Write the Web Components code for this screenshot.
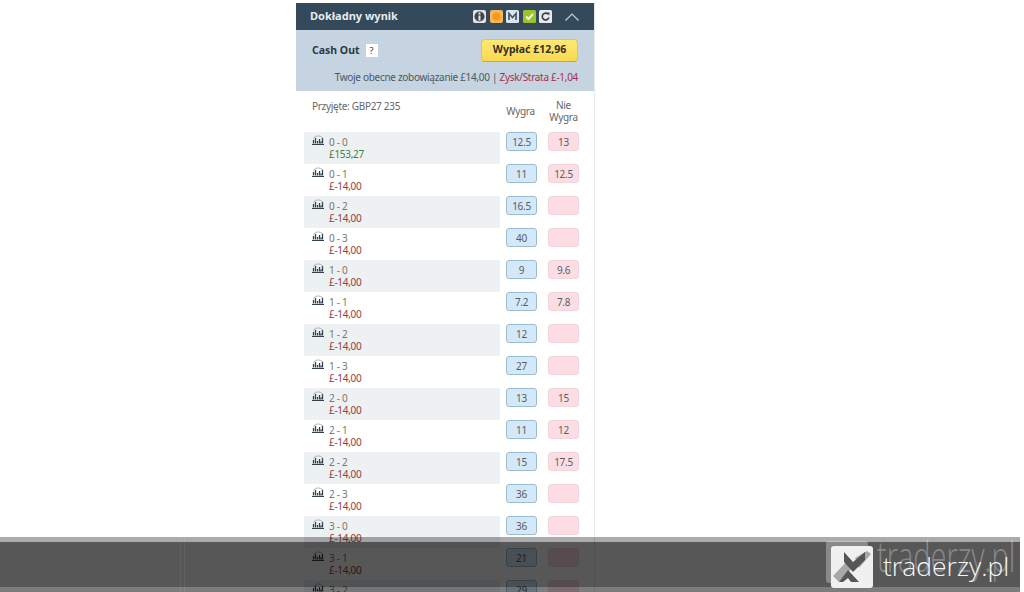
<!DOCTYPE html>
<html lang="pl">
<head>
<meta charset="utf-8">
<title>Dokładny wynik</title>
<style>
  html, body { margin: 0; height: 592px; overflow: hidden; background: #fff; }
  body { font-family: "Noto Sans", "DejaVu Sans", sans-serif; font-size: 10px; letter-spacing: -0.3px; color: #444; }
</style>
</head>
<body>
<bet-panel>
  <panel-header title="Dokładny wynik"></panel-header>
  <cash-out amount="£12,96" liability="£14,00" pl="£-1,04"></cash-out>
  <odds-head ref="GBP27 235"></odds-head>
  <score-row score="0 - 0" pl="£153,27" back="12.5" lay="13" shade win></score-row>
  <score-row score="0 - 1" pl="£-14,00" back="11" lay="12.5"></score-row>
  <score-row score="0 - 2" pl="£-14,00" back="16.5" shade></score-row>
  <score-row score="0 - 3" pl="£-14,00" back="40"></score-row>
  <score-row score="1 - 0" pl="£-14,00" back="9" lay="9.6" shade></score-row>
  <score-row score="1 - 1" pl="£-14,00" back="7.2" lay="7.8"></score-row>
  <score-row score="1 - 2" pl="£-14,00" back="12" shade></score-row>
  <score-row score="1 - 3" pl="£-14,00" back="27"></score-row>
  <score-row score="2 - 0" pl="£-14,00" back="13" lay="15" shade></score-row>
  <score-row score="2 - 1" pl="£-14,00" back="11" lay="12"></score-row>
  <score-row score="2 - 2" pl="£-14,00" back="15" lay="17.5" shade></score-row>
  <score-row score="2 - 3" pl="£-14,00" back="36"></score-row>
  <score-row score="3 - 0" pl="£-14,00" back="36" shade></score-row>
  <score-row score="3 - 1" pl="£-14,00" back="21"></score-row>
  <score-row score="3 - 2" pl="£-14,00" back="29" shade></score-row>
</bet-panel>
<watermark-bar></watermark-bar>

<script>
class BaseComponent extends HTMLElement {
  constructor() {
    super();
    this.attachShadow({ mode: 'open' });
  }

  attr(name) {
    return this.getAttribute(name) || '';
  }

  connectedCallback() {
    this.shadowRoot.innerHTML = this.template();
  }
}

class BetPanel extends BaseComponent {
  template() {
    return `
      <style>
        :host {
          display: block;
          box-sizing: border-box;
          width: 299px;
          margin: 3px 0 0 296px;
          border-right: 1px solid #e6e9ec;
          background: #fff;
        }
      </style>
      <slot></slot>
    `;
  }
}

class PanelHeader extends BaseComponent {
  template() {
    return `
      <style>
        :host {
          display: flex;
          align-items: center;
          height: 27px;
          padding: 0 15px 0 14px;
          background: #34495a;
          color: #e6ecf0;
          font-size: 11px;
          font-weight: bold;
          letter-spacing: 0;
        }
        .title { flex: 1; margin-bottom: 2px; }
        .icons { display: flex; gap: 3.5px; margin-right: 13px; }
        svg { display: block; }
      </style>
      <span class="title">${this.attr('title')}</span>
      <div class="icons">
        <svg width="13" height="13" viewBox="0 0 13 13"><rect width="13" height="13" rx="2" fill="#dfe3e6"/><circle cx="6.5" cy="6.5" r="5" fill="#3f454a"/><rect x="5.5" y="2.5" width="2" height="2" fill="#e8e8e8"/><rect x="5.5" y="5.5" width="2" height="5" fill="#e8e8e8"/></svg>
        <svg width="13" height="13" viewBox="0 0 13 13"><rect width="13" height="13" rx="2" fill="#f7b55a"/><circle cx="6.5" cy="6.5" r="4" fill="#f39a1e"/></svg>
        <svg width="13" height="13" viewBox="0 0 13 13"><rect width="13" height="13" rx="1.5" fill="#d6e5f1"/><path d="M3 10V3.5L6.5 7.5L10 3.5V10" fill="none" stroke="#4a5761" stroke-width="1.7"/></svg>
        <svg width="13" height="13" viewBox="0 0 13 13"><rect width="13" height="13" rx="1.5" fill="#9cc32c"/><path d="M3 6.5L5.5 9L10 4" fill="none" stroke="#f4f7e6" stroke-width="2"/></svg>
        <svg width="13" height="13" viewBox="0 0 13 13"><rect width="13" height="13" rx="1.5" fill="#e6eaed"/><path d="M9.3 4.3A3.4 3.4 0 1 0 9.9 7.5" fill="none" stroke="#3a3f44" stroke-width="1.7"/><path d="M7.5 2.5H10.5V5.5Z" fill="#3a3f44"/></svg>
      </div>
      <svg width="14" height="8" viewBox="0 0 14 8"><path d="M.5 7.5L7 1L13.5 7.5" fill="none" stroke="#c4cfd6" stroke-width="1.2"/></svg>
    `;
  }
}

class CashOut extends BaseComponent {
  template() {
    return `
      <style>
        :host {
          display: block;
          box-sizing: border-box;
          height: 61px;
          padding: 9px 16px 0 16px;
          background: #c5d4e0;
          color: #2b3a45;
        }
        .top { display: flex; align-items: center; height: 23px; font-size: 10.5px; font-weight: bold; letter-spacing: 0; }
        .label { margin-bottom: 2px; }
        .help {
          width: 12px;
          height: 13px;
          margin: 0 0 1px 6px;
          background: #fff;
          font-weight: normal;
          font-size: 9px;
          line-height: 13px;
          text-align: center;
        }
        .btn {
          box-sizing: border-box;
          width: 97px;
          height: 23px;
          margin-left: auto;
          border: 1px solid #e6c53c;
          border-bottom-color: #c9a92c;
          border-radius: 4px;
          background: linear-gradient(#ffe873, #fbd94f);
          text-align: center;
          line-height: 19px;
          color: #33302a;
        }
        .line { margin-top: 8px; text-align: right; white-space: nowrap; color: #4a5862; }
        .pl { color: #a5304f; }
      </style>
      <div class="top">
        <span class="label">Cash Out</span>
        <span class="help">?</span>
        <span class="btn">Wypłać ${this.attr('amount')}</span>
      </div>
      <div class="line">Twoje obecne zobowiązanie ${this.attr('liability')} | <span class="pl">Zysk/Strata ${this.attr('pl')}</span></div>
    `;
  }
}

class OddsHead extends BaseComponent {
  template() {
    return `
      <style>
        :host {
          display: grid;
          grid-template-columns: 1fr 43px 43px;
          box-sizing: border-box;
          height: 41px;
          padding: 8px 9px 0 16px;
          color: #666;
          line-height: 12px;
        }
        .ref { padding-top: 1px; }
        .col { text-align: center; }
        .mid { padding-top: 6px; }
      </style>
      <span class="ref">Przyjęte: ${this.attr('ref')}</span>
      <span class="col mid">Wygra</span>
      <span class="col">Nie<br>Wygra</span>
    `;
  }
}

class ScoreRow extends BaseComponent {
  template() {
    const win = this.hasAttribute('win');
    return `
      <style>
        :host {
          display: flex;
          height: 32px;
          padding-left: 8px;
        }
        .info {
          display: flex;
          width: 196px;
          padding: 4px 0 0 8px;
          box-sizing: border-box;
          background: ${this.hasAttribute('shade') ? '#eef1f2' : 'transparent'};
        }
        svg { display: block; margin: -1px 5px 0 0; }
        .score { line-height: 12px; color: #777; }
        .pl { display: block; color: ${win ? '#3d803d' : '#94403f'}; }
        .odds {
          box-sizing: border-box;
          width: 31px;
          height: 19px;
          border-radius: 3px;
          text-align: center;
          line-height: 18px;
          color: #5c5c5c;
        }
        .back { margin-left: 6px; border: 1px solid #9dbbcf; background: #d3e8f8; }
        .lay { margin-left: 11px; border: 1px solid #f3d5db; background: #fddde4; }
      </style>
      <div class="info">
        <svg width="12" height="10" viewBox="0 0 12 10">
          <path d="M0 9.5H12" stroke="#33434e"/>
          <path d="M1.5 8.5V5M3.5 8.5V3M5.5 8.5V6M7.5 8.5V4M9 8.5V6.5M10.5 8.5V3" stroke="#33434e" stroke-width="1.3"/>
          <path d="M1 3.5Q6 -1.5 11 3" fill="none" stroke="#8d9aa3" stroke-width="0.7"/>
        </svg>
        <div class="score">${this.attr('score')}<span class="pl">${this.attr('pl')}</span></div>
      </div>
      <div class="odds back">${this.attr('back')}</div>
      <div class="odds lay">${this.attr('lay')}</div>
    `;
  }
}

class WatermarkBar extends BaseComponent {
  template() {
    return `
      <style>
        :host {
          position: absolute;
          left: 0;
          top: 537px;
          width: 1020px;
          height: 55px;
          box-sizing: border-box;
          border-top: 5px solid rgba(0, 0, 0, 0.33);
          border-bottom: 5px solid rgba(0, 0, 0, 0.51);
          background: rgba(0, 0, 0, 0.66);
          background-clip: padding-box;
          font-family: "Open Sans", sans-serif;
          letter-spacing: 0;
        }
        .seam {
          position: absolute;
          top: -5px;
          bottom: -5px;
          width: 1px;
          background: rgba(255, 255, 255, 0.07);
        }
        .ghost-box {
          position: absolute;
          left: 826px;
          top: -1px;
          width: 42px;
          height: 42px;
          border-radius: 3px;
          background: rgba(255, 255, 255, 0.3);
        }
        .logo { position: absolute; left: 831px; top: 4px; }
        .ghost-text {
          position: absolute;
          left: 877px;
          top: -2px;
          font-size: 29px;
          font-weight: 300;
          line-height: 40px;
          color: rgba(255, 255, 255, 0.3);
          transform: scaleY(1.45);
          transform-origin: 0 70%;
          white-space: nowrap;
        }
        .text {
          position: absolute;
          left: 883px;
          top: 6px;
          font-size: 26.5px;
          font-weight: 300;
          line-height: 36px;
          color: #f6f6f6;
          white-space: nowrap;
        }
      </style>
      <span class="seam" style="left:180px"></span>
      <span class="seam" style="left:184px"></span>
      <div class="ghost-box"></div>
      <svg class="logo" width="42" height="42" viewBox="0 0 42 42">
        <rect width="42" height="42" rx="3" fill="#f0f0f0"/>
        <path d="M2 30L18 13L24 19L8 36Z" fill="#a8a8a8"/>
        <path d="M24 12L36 5L40 8L28 22Z" fill="#a8a8a8"/>
        <path d="M13 6L22 16L34 6V14L22 26L13 16Z" fill="#565656"/>
        <path d="M8 36L17 24L28 36H20L17 32L12 36Z" fill="#565656"/>
      </svg>
      <span class="ghost-text">traderzy.pl</span>
      <span class="text">traderzy.pl</span>
    `;
  }
}

window.customElements.define('bet-panel', BetPanel);
window.customElements.define('panel-header', PanelHeader);
window.customElements.define('cash-out', CashOut);
window.customElements.define('odds-head', OddsHead);
window.customElements.define('score-row', ScoreRow);
window.customElements.define('watermark-bar', WatermarkBar);
</script>
</body>
</html>
